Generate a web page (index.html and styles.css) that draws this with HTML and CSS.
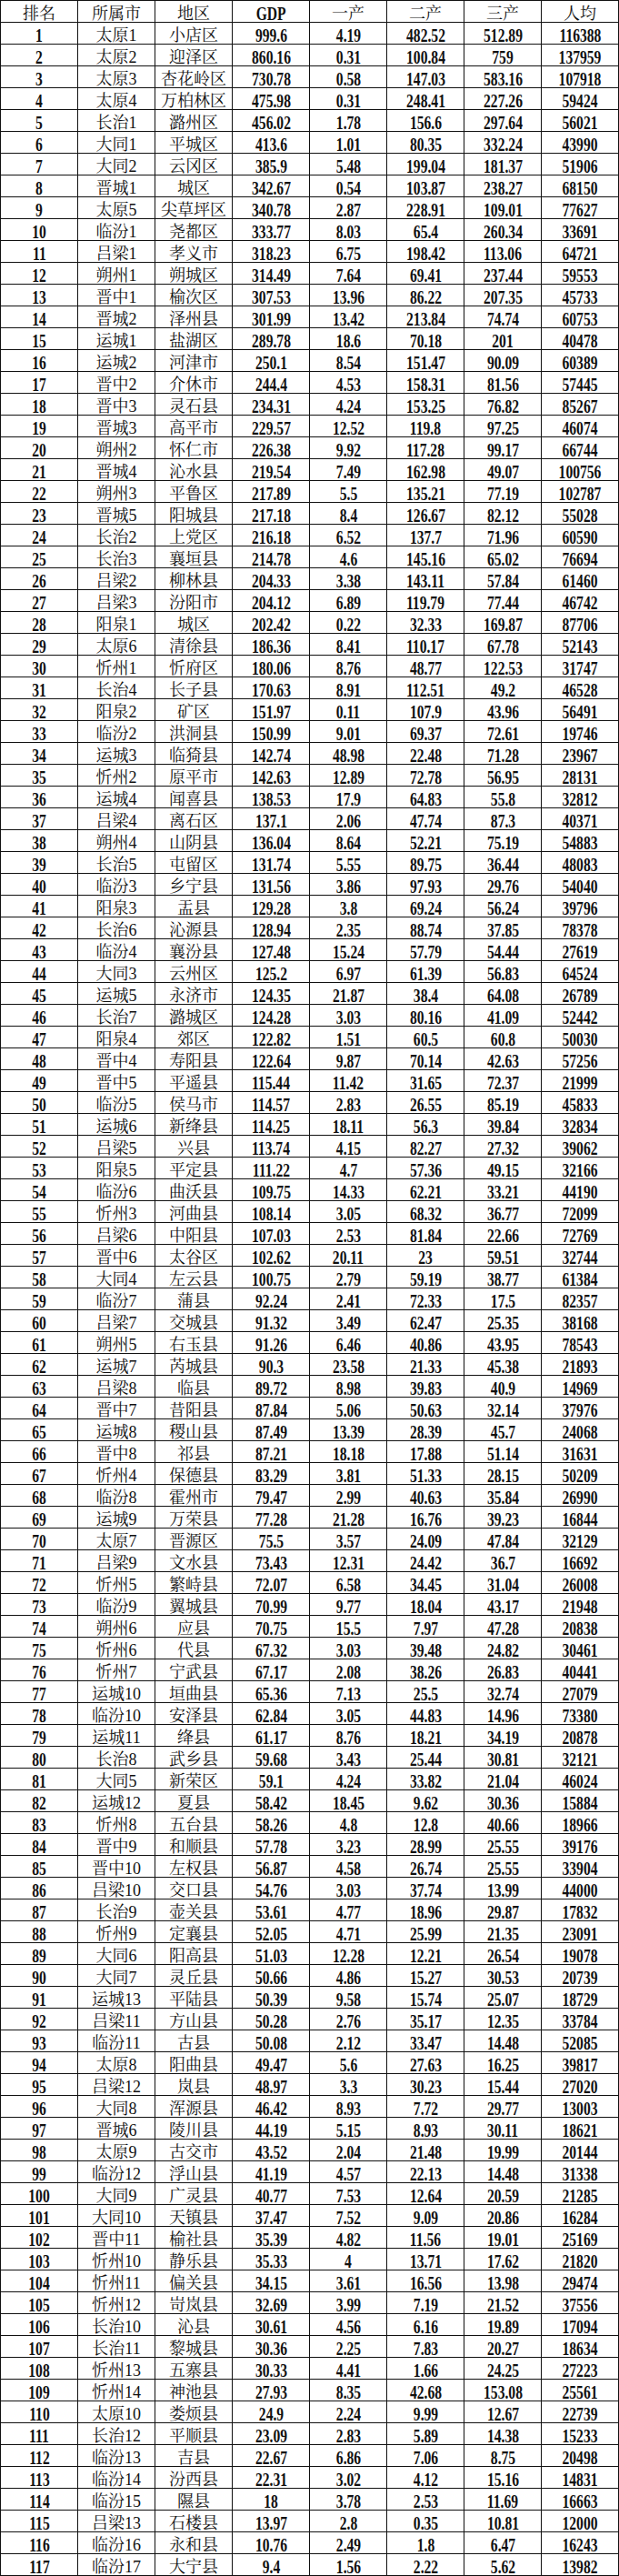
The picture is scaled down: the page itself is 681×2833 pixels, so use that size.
FILE: index.html
```html
<!DOCTYPE html>
<html lang="zh-CN">
<head>
<meta charset="utf-8">
<title>山西县区GDP排名</title>
<link rel="stylesheet" href="styles.css">
</head>
<body>
<table class="rank">
<colgroup><col><col><col><col><col><col><col><col></colgroup>
<thead>
<tr><th>排名</th><th>所属市</th><th>地区</th><th><span>GDP</span></th><th>一产</th><th>二产</th><th>三产</th><th>人均</th></tr>
</thead>
<tbody>
<tr><td><span>1</span></td><td>太原1</td><td>小店区</td><td><span>999.6</span></td><td><span>4.19</span></td><td><span>482.52</span></td><td><span>512.89</span></td><td><span>116388</span></td></tr>
<tr><td><span>2</span></td><td>太原2</td><td>迎泽区</td><td><span>860.16</span></td><td><span>0.31</span></td><td><span>100.84</span></td><td><span>759</span></td><td><span>137959</span></td></tr>
<tr><td><span>3</span></td><td>太原3</td><td>杏花岭区</td><td><span>730.78</span></td><td><span>0.58</span></td><td><span>147.03</span></td><td><span>583.16</span></td><td><span>107918</span></td></tr>
<tr><td><span>4</span></td><td>太原4</td><td>万柏林区</td><td><span>475.98</span></td><td><span>0.31</span></td><td><span>248.41</span></td><td><span>227.26</span></td><td><span>59424</span></td></tr>
<tr><td><span>5</span></td><td>长治1</td><td>潞州区</td><td><span>456.02</span></td><td><span>1.78</span></td><td><span>156.6</span></td><td><span>297.64</span></td><td><span>56021</span></td></tr>
<tr><td><span>6</span></td><td>大同1</td><td>平城区</td><td><span>413.6</span></td><td><span>1.01</span></td><td><span>80.35</span></td><td><span>332.24</span></td><td><span>43990</span></td></tr>
<tr><td><span>7</span></td><td>大同2</td><td>云冈区</td><td><span>385.9</span></td><td><span>5.48</span></td><td><span>199.04</span></td><td><span>181.37</span></td><td><span>51906</span></td></tr>
<tr><td><span>8</span></td><td>晋城1</td><td>城区</td><td><span>342.67</span></td><td><span>0.54</span></td><td><span>103.87</span></td><td><span>238.27</span></td><td><span>68150</span></td></tr>
<tr><td><span>9</span></td><td>太原5</td><td>尖草坪区</td><td><span>340.78</span></td><td><span>2.87</span></td><td><span>228.91</span></td><td><span>109.01</span></td><td><span>77627</span></td></tr>
<tr><td><span>10</span></td><td>临汾1</td><td>尧都区</td><td><span>333.77</span></td><td><span>8.03</span></td><td><span>65.4</span></td><td><span>260.34</span></td><td><span>33691</span></td></tr>
<tr><td><span>11</span></td><td>吕梁1</td><td>孝义市</td><td><span>318.23</span></td><td><span>6.75</span></td><td><span>198.42</span></td><td><span>113.06</span></td><td><span>64721</span></td></tr>
<tr><td><span>12</span></td><td>朔州1</td><td>朔城区</td><td><span>314.49</span></td><td><span>7.64</span></td><td><span>69.41</span></td><td><span>237.44</span></td><td><span>59553</span></td></tr>
<tr><td><span>13</span></td><td>晋中1</td><td>榆次区</td><td><span>307.53</span></td><td><span>13.96</span></td><td><span>86.22</span></td><td><span>207.35</span></td><td><span>45733</span></td></tr>
<tr><td><span>14</span></td><td>晋城2</td><td>泽州县</td><td><span>301.99</span></td><td><span>13.42</span></td><td><span>213.84</span></td><td><span>74.74</span></td><td><span>60753</span></td></tr>
<tr><td><span>15</span></td><td>运城1</td><td>盐湖区</td><td><span>289.78</span></td><td><span>18.6</span></td><td><span>70.18</span></td><td><span>201</span></td><td><span>40478</span></td></tr>
<tr><td><span>16</span></td><td>运城2</td><td>河津市</td><td><span>250.1</span></td><td><span>8.54</span></td><td><span>151.47</span></td><td><span>90.09</span></td><td><span>60389</span></td></tr>
<tr><td><span>17</span></td><td>晋中2</td><td>介休市</td><td><span>244.4</span></td><td><span>4.53</span></td><td><span>158.31</span></td><td><span>81.56</span></td><td><span>57445</span></td></tr>
<tr><td><span>18</span></td><td>晋中3</td><td>灵石县</td><td><span>234.31</span></td><td><span>4.24</span></td><td><span>153.25</span></td><td><span>76.82</span></td><td><span>85267</span></td></tr>
<tr><td><span>19</span></td><td>晋城3</td><td>高平市</td><td><span>229.57</span></td><td><span>12.52</span></td><td><span>119.8</span></td><td><span>97.25</span></td><td><span>46074</span></td></tr>
<tr><td><span>20</span></td><td>朔州2</td><td>怀仁市</td><td><span>226.38</span></td><td><span>9.92</span></td><td><span>117.28</span></td><td><span>99.17</span></td><td><span>66744</span></td></tr>
<tr><td><span>21</span></td><td>晋城4</td><td>沁水县</td><td><span>219.54</span></td><td><span>7.49</span></td><td><span>162.98</span></td><td><span>49.07</span></td><td><span>100756</span></td></tr>
<tr><td><span>22</span></td><td>朔州3</td><td>平鲁区</td><td><span>217.89</span></td><td><span>5.5</span></td><td><span>135.21</span></td><td><span>77.19</span></td><td><span>102787</span></td></tr>
<tr><td><span>23</span></td><td>晋城5</td><td>阳城县</td><td><span>217.18</span></td><td><span>8.4</span></td><td><span>126.67</span></td><td><span>82.12</span></td><td><span>55028</span></td></tr>
<tr><td><span>24</span></td><td>长治2</td><td>上党区</td><td><span>216.18</span></td><td><span>6.52</span></td><td><span>137.7</span></td><td><span>71.96</span></td><td><span>60590</span></td></tr>
<tr><td><span>25</span></td><td>长治3</td><td>襄垣县</td><td><span>214.78</span></td><td><span>4.6</span></td><td><span>145.16</span></td><td><span>65.02</span></td><td><span>76694</span></td></tr>
<tr><td><span>26</span></td><td>吕梁2</td><td>柳林县</td><td><span>204.33</span></td><td><span>3.38</span></td><td><span>143.11</span></td><td><span>57.84</span></td><td><span>61460</span></td></tr>
<tr><td><span>27</span></td><td>吕梁3</td><td>汾阳市</td><td><span>204.12</span></td><td><span>6.89</span></td><td><span>119.79</span></td><td><span>77.44</span></td><td><span>46742</span></td></tr>
<tr><td><span>28</span></td><td>阳泉1</td><td>城区</td><td><span>202.42</span></td><td><span>0.22</span></td><td><span>32.33</span></td><td><span>169.87</span></td><td><span>87706</span></td></tr>
<tr><td><span>29</span></td><td>太原6</td><td>清徐县</td><td><span>186.36</span></td><td><span>8.41</span></td><td><span>110.17</span></td><td><span>67.78</span></td><td><span>52143</span></td></tr>
<tr><td><span>30</span></td><td>忻州1</td><td>忻府区</td><td><span>180.06</span></td><td><span>8.76</span></td><td><span>48.77</span></td><td><span>122.53</span></td><td><span>31747</span></td></tr>
<tr><td><span>31</span></td><td>长治4</td><td>长子县</td><td><span>170.63</span></td><td><span>8.91</span></td><td><span>112.51</span></td><td><span>49.2</span></td><td><span>46528</span></td></tr>
<tr><td><span>32</span></td><td>阳泉2</td><td>矿区</td><td><span>151.97</span></td><td><span>0.11</span></td><td><span>107.9</span></td><td><span>43.96</span></td><td><span>56491</span></td></tr>
<tr><td><span>33</span></td><td>临汾2</td><td>洪洞县</td><td><span>150.99</span></td><td><span>9.01</span></td><td><span>69.37</span></td><td><span>72.61</span></td><td><span>19746</span></td></tr>
<tr><td><span>34</span></td><td>运城3</td><td>临猗县</td><td><span>142.74</span></td><td><span>48.98</span></td><td><span>22.48</span></td><td><span>71.28</span></td><td><span>23967</span></td></tr>
<tr><td><span>35</span></td><td>忻州2</td><td>原平市</td><td><span>142.63</span></td><td><span>12.89</span></td><td><span>72.78</span></td><td><span>56.95</span></td><td><span>28131</span></td></tr>
<tr><td><span>36</span></td><td>运城4</td><td>闻喜县</td><td><span>138.53</span></td><td><span>17.9</span></td><td><span>64.83</span></td><td><span>55.8</span></td><td><span>32812</span></td></tr>
<tr><td><span>37</span></td><td>吕梁4</td><td>离石区</td><td><span>137.1</span></td><td><span>2.06</span></td><td><span>47.74</span></td><td><span>87.3</span></td><td><span>40371</span></td></tr>
<tr><td><span>38</span></td><td>朔州4</td><td>山阴县</td><td><span>136.04</span></td><td><span>8.64</span></td><td><span>52.21</span></td><td><span>75.19</span></td><td><span>54883</span></td></tr>
<tr><td><span>39</span></td><td>长治5</td><td>屯留区</td><td><span>131.74</span></td><td><span>5.55</span></td><td><span>89.75</span></td><td><span>36.44</span></td><td><span>48083</span></td></tr>
<tr><td><span>40</span></td><td>临汾3</td><td>乡宁县</td><td><span>131.56</span></td><td><span>3.86</span></td><td><span>97.93</span></td><td><span>29.76</span></td><td><span>54040</span></td></tr>
<tr><td><span>41</span></td><td>阳泉3</td><td>盂县</td><td><span>129.28</span></td><td><span>3.8</span></td><td><span>69.24</span></td><td><span>56.24</span></td><td><span>39796</span></td></tr>
<tr><td><span>42</span></td><td>长治6</td><td>沁源县</td><td><span>128.94</span></td><td><span>2.35</span></td><td><span>88.74</span></td><td><span>37.85</span></td><td><span>78378</span></td></tr>
<tr><td><span>43</span></td><td>临汾4</td><td>襄汾县</td><td><span>127.48</span></td><td><span>15.24</span></td><td><span>57.79</span></td><td><span>54.44</span></td><td><span>27619</span></td></tr>
<tr><td><span>44</span></td><td>大同3</td><td>云州区</td><td><span>125.2</span></td><td><span>6.97</span></td><td><span>61.39</span></td><td><span>56.83</span></td><td><span>64524</span></td></tr>
<tr><td><span>45</span></td><td>运城5</td><td>永济市</td><td><span>124.35</span></td><td><span>21.87</span></td><td><span>38.4</span></td><td><span>64.08</span></td><td><span>26789</span></td></tr>
<tr><td><span>46</span></td><td>长治7</td><td>潞城区</td><td><span>124.28</span></td><td><span>3.03</span></td><td><span>80.16</span></td><td><span>41.09</span></td><td><span>52442</span></td></tr>
<tr><td><span>47</span></td><td>阳泉4</td><td>郊区</td><td><span>122.82</span></td><td><span>1.51</span></td><td><span>60.5</span></td><td><span>60.8</span></td><td><span>50030</span></td></tr>
<tr><td><span>48</span></td><td>晋中4</td><td>寿阳县</td><td><span>122.64</span></td><td><span>9.87</span></td><td><span>70.14</span></td><td><span>42.63</span></td><td><span>57256</span></td></tr>
<tr><td><span>49</span></td><td>晋中5</td><td>平遥县</td><td><span>115.44</span></td><td><span>11.42</span></td><td><span>31.65</span></td><td><span>72.37</span></td><td><span>21999</span></td></tr>
<tr><td><span>50</span></td><td>临汾5</td><td>侯马市</td><td><span>114.57</span></td><td><span>2.83</span></td><td><span>26.55</span></td><td><span>85.19</span></td><td><span>45833</span></td></tr>
<tr><td><span>51</span></td><td>运城6</td><td>新绛县</td><td><span>114.25</span></td><td><span>18.11</span></td><td><span>56.3</span></td><td><span>39.84</span></td><td><span>32834</span></td></tr>
<tr><td><span>52</span></td><td>吕梁5</td><td>兴县</td><td><span>113.74</span></td><td><span>4.15</span></td><td><span>82.27</span></td><td><span>27.32</span></td><td><span>39062</span></td></tr>
<tr><td><span>53</span></td><td>阳泉5</td><td>平定县</td><td><span>111.22</span></td><td><span>4.7</span></td><td><span>57.36</span></td><td><span>49.15</span></td><td><span>32166</span></td></tr>
<tr><td><span>54</span></td><td>临汾6</td><td>曲沃县</td><td><span>109.75</span></td><td><span>14.33</span></td><td><span>62.21</span></td><td><span>33.21</span></td><td><span>44190</span></td></tr>
<tr><td><span>55</span></td><td>忻州3</td><td>河曲县</td><td><span>108.14</span></td><td><span>3.05</span></td><td><span>68.32</span></td><td><span>36.77</span></td><td><span>72099</span></td></tr>
<tr><td><span>56</span></td><td>吕梁6</td><td>中阳县</td><td><span>107.03</span></td><td><span>2.53</span></td><td><span>81.84</span></td><td><span>22.66</span></td><td><span>72769</span></td></tr>
<tr><td><span>57</span></td><td>晋中6</td><td>太谷区</td><td><span>102.62</span></td><td><span>20.11</span></td><td><span>23</span></td><td><span>59.51</span></td><td><span>32744</span></td></tr>
<tr><td><span>58</span></td><td>大同4</td><td>左云县</td><td><span>100.75</span></td><td><span>2.79</span></td><td><span>59.19</span></td><td><span>38.77</span></td><td><span>61384</span></td></tr>
<tr><td><span>59</span></td><td>临汾7</td><td>蒲县</td><td><span>92.24</span></td><td><span>2.41</span></td><td><span>72.33</span></td><td><span>17.5</span></td><td><span>82357</span></td></tr>
<tr><td><span>60</span></td><td>吕梁7</td><td>交城县</td><td><span>91.32</span></td><td><span>3.49</span></td><td><span>62.47</span></td><td><span>25.35</span></td><td><span>38168</span></td></tr>
<tr><td><span>61</span></td><td>朔州5</td><td>右玉县</td><td><span>91.26</span></td><td><span>6.46</span></td><td><span>40.86</span></td><td><span>43.95</span></td><td><span>78543</span></td></tr>
<tr><td><span>62</span></td><td>运城7</td><td>芮城县</td><td><span>90.3</span></td><td><span>23.58</span></td><td><span>21.33</span></td><td><span>45.38</span></td><td><span>21893</span></td></tr>
<tr><td><span>63</span></td><td>吕梁8</td><td>临县</td><td><span>89.72</span></td><td><span>8.98</span></td><td><span>39.83</span></td><td><span>40.9</span></td><td><span>14969</span></td></tr>
<tr><td><span>64</span></td><td>晋中7</td><td>昔阳县</td><td><span>87.84</span></td><td><span>5.06</span></td><td><span>50.63</span></td><td><span>32.14</span></td><td><span>37976</span></td></tr>
<tr><td><span>65</span></td><td>运城8</td><td>稷山县</td><td><span>87.49</span></td><td><span>13.39</span></td><td><span>28.39</span></td><td><span>45.7</span></td><td><span>24068</span></td></tr>
<tr><td><span>66</span></td><td>晋中8</td><td>祁县</td><td><span>87.21</span></td><td><span>18.18</span></td><td><span>17.88</span></td><td><span>51.14</span></td><td><span>31631</span></td></tr>
<tr><td><span>67</span></td><td>忻州4</td><td>保德县</td><td><span>83.29</span></td><td><span>3.81</span></td><td><span>51.33</span></td><td><span>28.15</span></td><td><span>50209</span></td></tr>
<tr><td><span>68</span></td><td>临汾8</td><td>霍州市</td><td><span>79.47</span></td><td><span>2.99</span></td><td><span>40.63</span></td><td><span>35.84</span></td><td><span>26990</span></td></tr>
<tr><td><span>69</span></td><td>运城9</td><td>万荣县</td><td><span>77.28</span></td><td><span>21.28</span></td><td><span>16.76</span></td><td><span>39.23</span></td><td><span>16844</span></td></tr>
<tr><td><span>70</span></td><td>太原7</td><td>晋源区</td><td><span>75.5</span></td><td><span>3.57</span></td><td><span>24.09</span></td><td><span>47.84</span></td><td><span>32129</span></td></tr>
<tr><td><span>71</span></td><td>吕梁9</td><td>文水县</td><td><span>73.43</span></td><td><span>12.31</span></td><td><span>24.42</span></td><td><span>36.7</span></td><td><span>16692</span></td></tr>
<tr><td><span>72</span></td><td>忻州5</td><td>繁峙县</td><td><span>72.07</span></td><td><span>6.58</span></td><td><span>34.45</span></td><td><span>31.04</span></td><td><span>26008</span></td></tr>
<tr><td><span>73</span></td><td>临汾9</td><td>翼城县</td><td><span>70.99</span></td><td><span>9.77</span></td><td><span>18.04</span></td><td><span>43.17</span></td><td><span>21948</span></td></tr>
<tr><td><span>74</span></td><td>朔州6</td><td>应县</td><td><span>70.75</span></td><td><span>15.5</span></td><td><span>7.97</span></td><td><span>47.28</span></td><td><span>20838</span></td></tr>
<tr><td><span>75</span></td><td>忻州6</td><td>代县</td><td><span>67.32</span></td><td><span>3.03</span></td><td><span>39.48</span></td><td><span>24.82</span></td><td><span>30461</span></td></tr>
<tr><td><span>76</span></td><td>忻州7</td><td>宁武县</td><td><span>67.17</span></td><td><span>2.08</span></td><td><span>38.26</span></td><td><span>26.83</span></td><td><span>40441</span></td></tr>
<tr><td><span>77</span></td><td>运城10</td><td>垣曲县</td><td><span>65.36</span></td><td><span>7.13</span></td><td><span>25.5</span></td><td><span>32.74</span></td><td><span>27079</span></td></tr>
<tr><td><span>78</span></td><td>临汾10</td><td>安泽县</td><td><span>62.84</span></td><td><span>3.05</span></td><td><span>44.83</span></td><td><span>14.96</span></td><td><span>73380</span></td></tr>
<tr><td><span>79</span></td><td>运城11</td><td>绛县</td><td><span>61.17</span></td><td><span>8.76</span></td><td><span>18.21</span></td><td><span>34.19</span></td><td><span>20878</span></td></tr>
<tr><td><span>80</span></td><td>长治8</td><td>武乡县</td><td><span>59.68</span></td><td><span>3.43</span></td><td><span>25.44</span></td><td><span>30.81</span></td><td><span>32121</span></td></tr>
<tr><td><span>81</span></td><td>大同5</td><td>新荣区</td><td><span>59.1</span></td><td><span>4.24</span></td><td><span>33.82</span></td><td><span>21.04</span></td><td><span>46024</span></td></tr>
<tr><td><span>82</span></td><td>运城12</td><td>夏县</td><td><span>58.42</span></td><td><span>18.45</span></td><td><span>9.62</span></td><td><span>30.36</span></td><td><span>15884</span></td></tr>
<tr><td><span>83</span></td><td>忻州8</td><td>五台县</td><td><span>58.26</span></td><td><span>4.8</span></td><td><span>12.8</span></td><td><span>40.66</span></td><td><span>18966</span></td></tr>
<tr><td><span>84</span></td><td>晋中9</td><td>和顺县</td><td><span>57.78</span></td><td><span>3.23</span></td><td><span>28.99</span></td><td><span>25.55</span></td><td><span>39176</span></td></tr>
<tr><td><span>85</span></td><td>晋中10</td><td>左权县</td><td><span>56.87</span></td><td><span>4.58</span></td><td><span>26.74</span></td><td><span>25.55</span></td><td><span>33904</span></td></tr>
<tr><td><span>86</span></td><td>吕梁10</td><td>交口县</td><td><span>54.76</span></td><td><span>3.03</span></td><td><span>37.74</span></td><td><span>13.99</span></td><td><span>44000</span></td></tr>
<tr><td><span>87</span></td><td>长治9</td><td>壶关县</td><td><span>53.61</span></td><td><span>4.77</span></td><td><span>18.96</span></td><td><span>29.87</span></td><td><span>17832</span></td></tr>
<tr><td><span>88</span></td><td>忻州9</td><td>定襄县</td><td><span>52.05</span></td><td><span>4.71</span></td><td><span>25.99</span></td><td><span>21.35</span></td><td><span>23091</span></td></tr>
<tr><td><span>89</span></td><td>大同6</td><td>阳高县</td><td><span>51.03</span></td><td><span>12.28</span></td><td><span>12.21</span></td><td><span>26.54</span></td><td><span>19078</span></td></tr>
<tr><td><span>90</span></td><td>大同7</td><td>灵丘县</td><td><span>50.66</span></td><td><span>4.86</span></td><td><span>15.27</span></td><td><span>30.53</span></td><td><span>20739</span></td></tr>
<tr><td><span>91</span></td><td>运城13</td><td>平陆县</td><td><span>50.39</span></td><td><span>9.58</span></td><td><span>15.74</span></td><td><span>25.07</span></td><td><span>18729</span></td></tr>
<tr><td><span>92</span></td><td>吕梁11</td><td>方山县</td><td><span>50.28</span></td><td><span>2.76</span></td><td><span>35.17</span></td><td><span>12.35</span></td><td><span>33784</span></td></tr>
<tr><td><span>93</span></td><td>临汾11</td><td>古县</td><td><span>50.08</span></td><td><span>2.12</span></td><td><span>33.47</span></td><td><span>14.48</span></td><td><span>52085</span></td></tr>
<tr><td><span>94</span></td><td>太原8</td><td>阳曲县</td><td><span>49.47</span></td><td><span>5.6</span></td><td><span>27.63</span></td><td><span>16.25</span></td><td><span>39817</span></td></tr>
<tr><td><span>95</span></td><td>吕梁12</td><td>岚县</td><td><span>48.97</span></td><td><span>3.3</span></td><td><span>30.23</span></td><td><span>15.44</span></td><td><span>27020</span></td></tr>
<tr><td><span>96</span></td><td>大同8</td><td>浑源县</td><td><span>46.42</span></td><td><span>8.93</span></td><td><span>7.72</span></td><td><span>29.77</span></td><td><span>13003</span></td></tr>
<tr><td><span>97</span></td><td>晋城6</td><td>陵川县</td><td><span>44.19</span></td><td><span>5.15</span></td><td><span>8.93</span></td><td><span>30.11</span></td><td><span>18621</span></td></tr>
<tr><td><span>98</span></td><td>太原9</td><td>古交市</td><td><span>43.52</span></td><td><span>2.04</span></td><td><span>21.48</span></td><td><span>19.99</span></td><td><span>20144</span></td></tr>
<tr><td><span>99</span></td><td>临汾12</td><td>浮山县</td><td><span>41.19</span></td><td><span>4.57</span></td><td><span>22.13</span></td><td><span>14.48</span></td><td><span>31338</span></td></tr>
<tr><td><span>100</span></td><td>大同9</td><td>广灵县</td><td><span>40.77</span></td><td><span>7.53</span></td><td><span>12.64</span></td><td><span>20.59</span></td><td><span>21285</span></td></tr>
<tr><td><span>101</span></td><td>大同10</td><td>天镇县</td><td><span>37.47</span></td><td><span>7.52</span></td><td><span>9.09</span></td><td><span>20.86</span></td><td><span>16284</span></td></tr>
<tr><td><span>102</span></td><td>晋中11</td><td>榆社县</td><td><span>35.39</span></td><td><span>4.82</span></td><td><span>11.56</span></td><td><span>19.01</span></td><td><span>25169</span></td></tr>
<tr><td><span>103</span></td><td>忻州10</td><td>静乐县</td><td><span>35.33</span></td><td><span>4</span></td><td><span>13.71</span></td><td><span>17.62</span></td><td><span>21820</span></td></tr>
<tr><td><span>104</span></td><td>忻州11</td><td>偏关县</td><td><span>34.15</span></td><td><span>3.61</span></td><td><span>16.56</span></td><td><span>13.98</span></td><td><span>29474</span></td></tr>
<tr><td><span>105</span></td><td>忻州12</td><td>岢岚县</td><td><span>32.69</span></td><td><span>3.99</span></td><td><span>7.19</span></td><td><span>21.52</span></td><td><span>37556</span></td></tr>
<tr><td><span>106</span></td><td>长治10</td><td>沁县</td><td><span>30.61</span></td><td><span>4.56</span></td><td><span>6.16</span></td><td><span>19.89</span></td><td><span>17094</span></td></tr>
<tr><td><span>107</span></td><td>长治11</td><td>黎城县</td><td><span>30.36</span></td><td><span>2.25</span></td><td><span>7.83</span></td><td><span>20.27</span></td><td><span>18634</span></td></tr>
<tr><td><span>108</span></td><td>忻州13</td><td>五寨县</td><td><span>30.33</span></td><td><span>4.41</span></td><td><span>1.66</span></td><td><span>24.25</span></td><td><span>27223</span></td></tr>
<tr><td><span>109</span></td><td>忻州14</td><td>神池县</td><td><span>27.93</span></td><td><span>8.35</span></td><td><span>42.68</span></td><td><span>153.08</span></td><td><span>25561</span></td></tr>
<tr><td><span>110</span></td><td>太原10</td><td>娄烦县</td><td><span>24.9</span></td><td><span>2.24</span></td><td><span>9.99</span></td><td><span>12.67</span></td><td><span>22739</span></td></tr>
<tr><td><span>111</span></td><td>长治12</td><td>平顺县</td><td><span>23.09</span></td><td><span>2.83</span></td><td><span>5.89</span></td><td><span>14.38</span></td><td><span>15233</span></td></tr>
<tr><td><span>112</span></td><td>临汾13</td><td>吉县</td><td><span>22.67</span></td><td><span>6.86</span></td><td><span>7.06</span></td><td><span>8.75</span></td><td><span>20498</span></td></tr>
<tr><td><span>113</span></td><td>临汾14</td><td>汾西县</td><td><span>22.31</span></td><td><span>3.02</span></td><td><span>4.12</span></td><td><span>15.16</span></td><td><span>14831</span></td></tr>
<tr><td><span>114</span></td><td>临汾15</td><td>隰县</td><td><span>18</span></td><td><span>3.78</span></td><td><span>2.53</span></td><td><span>11.69</span></td><td><span>16663</span></td></tr>
<tr><td><span>115</span></td><td>吕梁13</td><td>石楼县</td><td><span>13.97</span></td><td><span>2.8</span></td><td><span>0.35</span></td><td><span>10.81</span></td><td><span>12000</span></td></tr>
<tr><td><span>116</span></td><td>临汾16</td><td>永和县</td><td><span>10.76</span></td><td><span>2.49</span></td><td><span>1.8</span></td><td><span>6.47</span></td><td><span>16243</span></td></tr>
<tr><td><span>117</span></td><td>临汾17</td><td>大宁县</td><td><span>9.4</span></td><td><span>1.56</span></td><td><span>2.22</span></td><td><span>5.62</span></td><td><span>13982</span></td></tr>
</tbody>
</table>
</body>
</html>
```
FILE: styles.css
```css
html, body {
  margin: 0;
  padding: 0;
  background: #fff;
}

.rank {
  width: 681px;
  table-layout: fixed;
  border-collapse: separate;
  border-spacing: 1px;
  background: #111;
  font-family: "Liberation Serif", "Noto Serif CJK SC", "Noto Sans CJK SC", serif;
  font-size: 18px;
  color: #111;
}

.rank col {
  width: 84px;
}

.rank th,
.rank td {
  background: #fff;
  height: 23px;
  box-sizing: border-box;
  padding: 5px 0 0;
  line-height: 18px;
  text-align: center;
  vertical-align: top;
  white-space: nowrap;
  font-weight: 400;
}

.rank th span,
.rank td span {
  display: inline-block;
  vertical-align: top;
  line-height: 18px;
  font-size: 20px;
  font-weight: 700;
  transform: scaleX(0.78);
}
```
